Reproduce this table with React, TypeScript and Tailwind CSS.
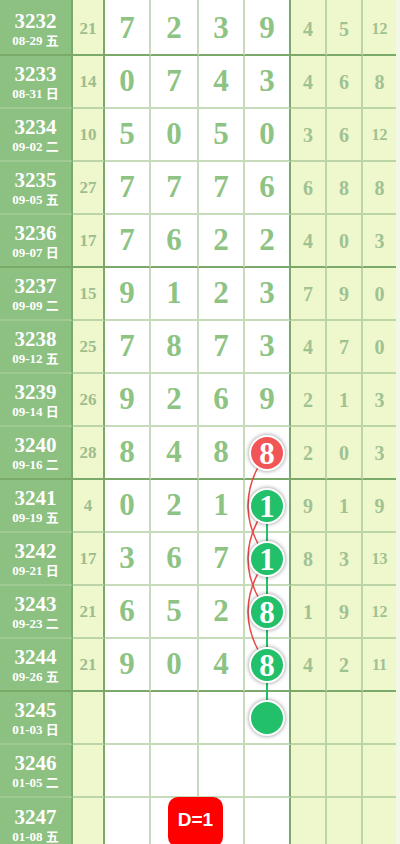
import React from "react";

type Row = { id: string; date: string; a: string; d: string[]; r: string[] };

const rows: Row[] = [
  { id: "3232", date: "08-29 五", a: "21", d: ["7", "2", "3", "9"], r: ["4", "5", "12"] },
  { id: "3233", date: "08-31 日", a: "14", d: ["0", "7", "4", "3"], r: ["4", "6", "8"] },
  { id: "3234", date: "09-02 二", a: "10", d: ["5", "0", "5", "0"], r: ["3", "6", "12"] },
  { id: "3235", date: "09-05 五", a: "27", d: ["7", "7", "7", "6"], r: ["6", "8", "8"] },
  { id: "3236", date: "09-07 日", a: "17", d: ["7", "6", "2", "2"], r: ["4", "0", "3"] },
  { id: "3237", date: "09-09 二", a: "15", d: ["9", "1", "2", "3"], r: ["7", "9", "0"] },
  { id: "3238", date: "09-12 五", a: "25", d: ["7", "8", "7", "3"], r: ["4", "7", "0"] },
  { id: "3239", date: "09-14 日", a: "26", d: ["9", "2", "6", "9"], r: ["2", "1", "3"] },
  { id: "3240", date: "09-16 二", a: "28", d: ["8", "4", "8", "8"], r: ["2", "0", "3"] },
  { id: "3241", date: "09-19 五", a: "4", d: ["0", "2", "1", "1"], r: ["9", "1", "9"] },
  { id: "3242", date: "09-21 日", a: "17", d: ["3", "6", "7", "1"], r: ["8", "3", "13"] },
  { id: "3243", date: "09-23 二", a: "21", d: ["6", "5", "2", "8"], r: ["1", "9", "12"] },
  { id: "3244", date: "09-26 五", a: "21", d: ["9", "0", "4", "8"], r: ["4", "2", "11"] },
  { id: "3245", date: "01-03 日", a: "", d: ["", "", "", ""], r: ["", "", ""] },
  { id: "3246", date: "01-05 二", a: "", d: ["", "", "", ""], r: ["", "", ""] },
  { id: "3247", date: "01-08 五", a: "", d: ["", "", "", ""], r: ["", "", ""] },
];

const serif = { fontFamily: '"Liberation Serif", "Noto Sans CJK SC", serif' };

function Ball({ n, color }: { n: string; color: "red" | "green" }) {
  return (
    <div
      className={
        "relative z-[2] flex h-[36px] w-[36px] items-center justify-center rounded-full border-2 border-white text-[31px] font-bold leading-none text-white shadow-[0_0_4px_rgba(0,0,0,0.45)] " +
        (color === "red" ? "bg-[#f25555]" : "bg-[#22c06a]")
      }
    >
      <span className="mt-[1px]">{n}</span>
    </div>
  );
}

export default function App() {
  const cx = 267;
  const cy = (k: number) => 28.5 + 53 * k;
  return (
    <div className="relative h-[844px] w-[400px] overflow-hidden bg-[#f3f7e7]" style={serif}>
      <div className="flex w-[396px] flex-col">
        {rows.map((row, i) => {
          const thick = i === 0 || i === 4 || i === 8 || i === 12;
          const first = i === 0;
          const last = i === rows.length - 1;
          const rowH = first ? "h-[56px]" : "h-[53px]";
          const bb = last ? "" : "border-b-2";
          const lineW = thick ? "border-b-[#7aa96a]" : "border-b-[#c5dbb9]";
          const lineY = thick ? "border-b-[#7aa96a]" : "border-b-[#bcd5a8]";
          const lineL = thick ? "border-b-[#7aa96a]" : "border-b-[#9fca92]";
          const pt = first ? "pt-[3px]" : "";
          const ballIdx = i >= 8 && i <= 13;
          return (
            <div key={row.id} className={"flex " + rowH}>
              <div
                className={`flex w-[73px] flex-col items-center justify-center border-r-2 border-r-[#7aa96a] bg-[#8dc181] text-white ${bb} ${lineL} ${pt}`}
              >
                <div className="text-[21px] font-bold leading-[24px]">{row.id}</div>
                <div className="text-[13px] font-bold leading-[16px]">{row.date}</div>
              </div>
              <div
                className={`flex w-[32px] items-center justify-center border-r-2 border-r-[#7aa96a] bg-[#eff7cc] text-[17px] font-bold text-[#9dbd8f] ${bb} ${lineY} ${pt}`}
              >
                {row.a}
              </div>
              {row.d.map((v, j) => {
                const w = j === 1 ? "w-[48px]" : "w-[46px]";
                const br = j === 3 ? "border-r-[#7aa96a]" : "border-r-[#c5dbb9]";
                const isBall = j === 3 && ballIdx;
                return (
                  <div
                    key={j}
                    className={`flex ${w} items-center justify-center border-r-2 ${br} bg-white text-[31px] font-bold text-[#8dc383] ${bb} ${lineW} ${pt}`}
                  >
                    {isBall ? (
                      <Ball n={v} color={i === 8 ? "red" : "green"} />
                    ) : (
                      v
                    )}
                  </div>
                );
              })}
              {row.r.map((v, j) => {
                const w = j === 2 ? "w-[33px]" : "w-[36px] border-r-2 border-r-[#bcd5a8]";
                const size = v.length > 1 ? "text-[16px]" : "text-[20px]";
                return (
                  <div
                    key={j}
                    className={`flex ${w} items-center justify-center bg-[#eff7cc] ${size} font-bold text-[#9fc293] ${bb} ${lineY} ${pt}`}
                  >
                    {v}
                  </div>
                );
              })}
            </div>
          );
        })}
      </div>

      <svg
        className="pointer-events-none absolute left-0 top-0 z-[1]"
        width="400"
        height="844"
        viewBox="0 0 400 844"
      >
        <line x1={cx} y1={cy(9)} x2={cx} y2={cy(13)} stroke="#22c06a" strokeWidth="2" />
        {[8, 9, 10].map((k) => (
          <path
            key={k}
            d={`M${cx} ${cy(k)} Q${cx - 38} ${cy(k + 1)} ${cx} ${cy(k + 2)}`}
            fill="none"
            stroke="#e84a4a"
            strokeWidth="1.5"
          />
        ))}
      </svg>

      <div
        className="absolute left-[168px] top-[797px] z-[3] flex h-[50px] w-[55px] items-center justify-center rounded-[10px] bg-[#ff0000] text-[19px] font-bold text-white"
        style={{ fontFamily: '"Liberation Sans", Arial, sans-serif' }}
      >
        <span className="-mt-[3px]">D=1</span>
      </div>
    </div>
  );
}
